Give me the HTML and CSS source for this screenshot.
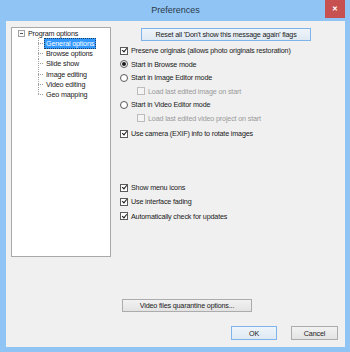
FILE: index.html
```html
<!DOCTYPE html>
<html lang="en">
<head>
    <meta charset="UTF-8">
    <title>Preferences</title>
    <link rel="stylesheet" href="styles.css">
</head>
<body>
    <div class="window">
        <div class="titlebar">
            <div class="title">Preferences</div>
            <div class="close-btn">&#x2715;</div>
        </div>

        <div class="client">
            <div class="main">
                <div class="tree">
                    <div class="tree-root">
                        <span class="expander"></span>
                        <span>Program options</span>
                    </div>
                    <ul class="tree-children">
                        <li><span class="selected">General options</span></li>
                        <li><span>Browse options</span></li>
                        <li><span>Slide show</span></li>
                        <li><span>Image editing</span></li>
                        <li><span>Video editing</span></li>
                        <li><span>Geo mapping</span></li>
                    </ul>
                </div>

                <div class="options">
                    <button type="button" class="btn btn-default reset-btn">Reset all 'Don't show this message again' flags</button>

                    <div class="row"><span class="check on"></span>Preserve originals (allows photo originals restoration)</div>
                    <div class="row"><span class="radio on"></span>Start in Browse mode</div>
                    <div class="row"><span class="radio"></span>Start in Image Editor mode</div>
                    <div class="row sub disabled"><span class="check"></span>Load last edited image on start</div>
                    <div class="row"><span class="radio"></span>Start in Video Editor mode</div>
                    <div class="row sub disabled"><span class="check"></span>Load last edited video project on start</div>
                    <div class="row camera"><span class="check on"></span>Use camera (EXIF) info to rotate images</div>

                    <div class="group">
                        <div class="row tall"><span class="check on"></span>Show menu icons</div>
                        <div class="row tall"><span class="check on"></span>Use interface fading</div>
                        <div class="row tall"><span class="check on"></span>Automatically check for updates</div>
                    </div>
                </div>
            </div>

            <button type="button" class="btn quarantine-btn">Video files quarantine options...</button>

            <div class="dialog-buttons">
                <button type="button" class="btn btn-default ok-btn">OK</button>
                <button type="button" class="btn cancel-btn">Cancel</button>
            </div>
        </div>
    </div>
</body>
</html>
```

FILE: styles.css
```css
body {
    margin: 0;
    font-family: "Liberation Sans", Arial, sans-serif;
    font-size: 7.2px;
    letter-spacing: -0.17px;
    color: #1a1a1a;
}

.window {
    width: 350px;
    height: 352px;
    box-sizing: border-box;
    padding: 0 5px 5px 6px;
    background-color: #8fc4f4;
    display: flex;
    flex-direction: column;
}

.titlebar {
    height: 21px;
    display: flex;
    flex: none;
}

.title {
    flex: 1;
    padding-left: 20px;
    text-align: center;
    line-height: 20px;
    font-size: 9px;
    letter-spacing: 0;
    color: #2b3a4a;
}

.close-btn {
    width: 20px;
    height: 18px;
    background-color: #c75050;
    color: #fff;
    font-size: 7px;
    font-weight: bold;
    text-align: center;
    line-height: 18px;
    letter-spacing: 0;
}

.client {
    flex: 1;
    background-color: #f0f0f0;
    padding: 6px 7px 7px 5px;
    display: flex;
    flex-direction: column;
}

.main {
    display: flex;
    height: 230px;
}

/* tree */

.tree {
    width: 100px;
    box-sizing: border-box;
    border: 1px solid #a9a9a9;
    background-color: #fff;
    padding: 0 0 0 6px;
}

.tree-root {
    height: 10px;
    display: flex;
    align-items: center;
}

.expander {
    width: 7px;
    height: 7px;
    box-sizing: border-box;
    border: 1px solid #a0a0a0;
    margin-right: 3px;
    background: linear-gradient(#555, #555) center / 3px 1px no-repeat, #fafafa;
}

.tree-children {
    list-style: none;
    margin: 0 0 0 20px;
    padding: 0;
}

.tree-children li {
    height: 10.3px;
    display: flex;
    align-items: center;
}

.tree-children li::before {
    content: '';
    width: 6px;
    align-self: stretch;
    flex: none;
    background:
        repeating-linear-gradient(to bottom, #a0a0a0 0 1px, transparent 1px 2px) left top / 1px 100% no-repeat,
        repeating-linear-gradient(to right, #a0a0a0 0 1px, transparent 1px 2px) left center / 100% 1px no-repeat;
}

.tree-children li:last-child::before {
    background-size: 1px 50%, 100% 1px;
}

.tree-children li span {
    padding: 0 1px;
    line-height: 9px;
    border: 1px solid transparent;
}

.tree-children li .selected {
    background-color: #3399ff;
    color: #fff;
    border: 1px dotted #1b3f66;
}

/* options */

.options {
    flex: 1;
    margin-left: 9px;
    display: flex;
    flex-direction: column;
}

.row {
    height: 13.5px;
    display: flex;
    align-items: center;
    white-space: nowrap;
}

.row.sub {
    padding-left: 17px;
}

.row.camera {
    margin-top: 2px;
}

.group {
    margin-top: 40px;
}

.row.tall {
    height: 14.3px;
}

.disabled {
    color: #9a9a9a;
}

.check,
.radio {
    width: 8px;
    height: 8px;
    box-sizing: border-box;
    border: 1px solid #5a5a5a;
    background-color: #fff;
    margin-right: 3px;
    flex: none;
    display: flex;
    align-items: center;
    justify-content: center;
}

.radio {
    border-radius: 50%;
}

.radio.on::after {
    content: '';
    width: 4px;
    height: 4px;
    border-radius: 50%;
    background-color: #1a1a1a;
}

.check.on::after {
    content: '';
    width: 2px;
    height: 4px;
    border: solid #1a1a1a;
    border-width: 0 1.5px 1.5px 0;
    transform: translate(0, -1px) rotate(40deg);
}

.disabled .check {
    border-color: #bcbcbc;
    background-color: #f4f4f4;
}

/* buttons */

.btn {
    font-family: inherit;
    font-size: 7.2px;
    letter-spacing: -0.17px;
    color: #1a1a1a;
    height: 13px;
    padding: 0;
    border: 1px solid #acacac;
    background: linear-gradient(#f2f2f2, #e3e3e3);
    box-sizing: border-box;
}

.btn-default {
    border-color: #7eb4ea;
    background: linear-gradient(#eef4fa, #dfe9f3);
}

.reset-btn {
    width: 170px;
    margin: 1px 0 3px 21px;
}

.quarantine-btn {
    width: 130px;
    margin: 42px 0 0 111px;
}

.dialog-buttons {
    display: flex;
    justify-content: flex-end;
    gap: 14px;
    margin-top: 14px;
}

.ok-btn {
    width: 46px;
    height: 14px;
}

.cancel-btn {
    width: 47px;
    height: 14px;
}
```
